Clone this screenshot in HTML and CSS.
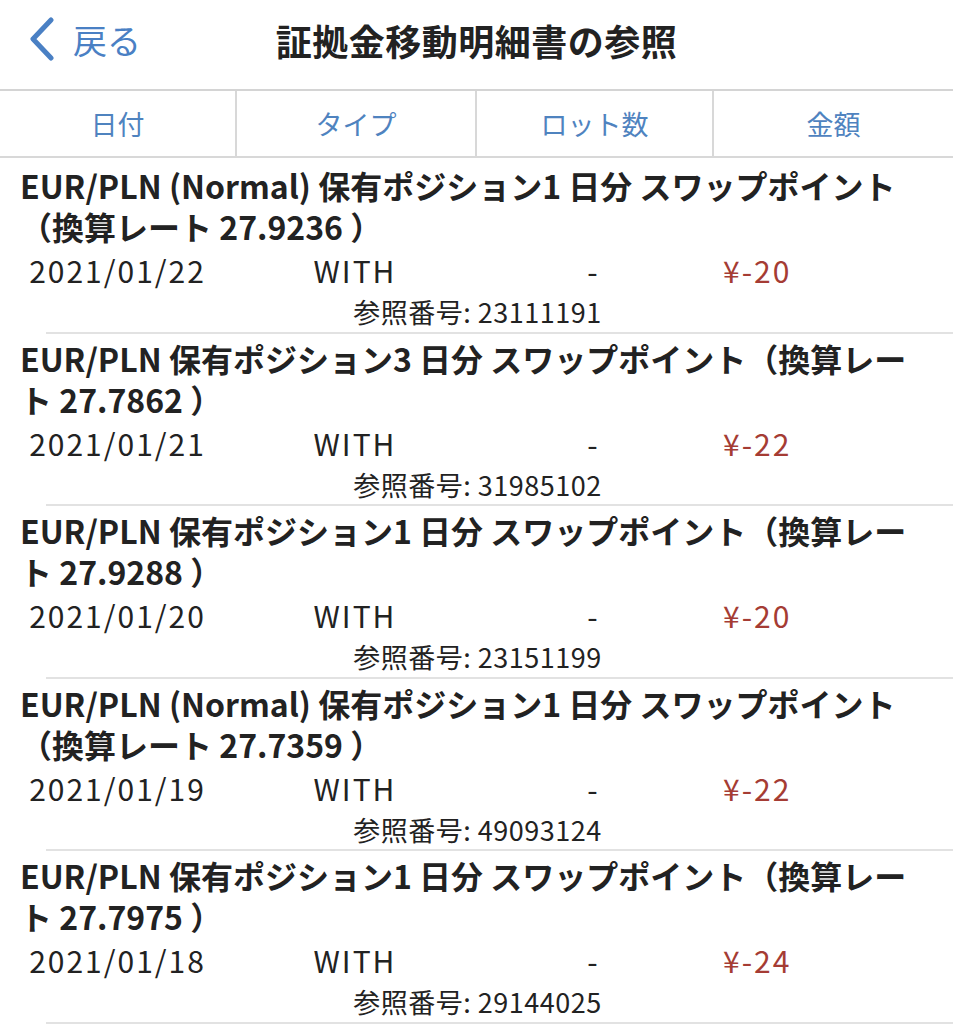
FILE: index.html
```html
<!DOCTYPE html>
<html lang="ja">
<head>
    <meta charset="UTF-8">
    <meta name="viewport" content="width=device-width, initial-scale=1.0">
    <title>証拠金移動明細書の参照</title>
    <link rel="stylesheet" href="styles.css">
</head>
<body>
    <header class="nav-bar">
        <a class="back-link" href="#">
            <svg class="back-icon" width="28" height="46" viewBox="0 0 28 46">
                <path d="M24 3 L6 22 L24 41" fill="none" stroke="#4a80c4" stroke-width="5" stroke-linecap="round" stroke-linejoin="round"/>
            </svg>
            <span>戻る</span>
        </a>
        <h1 class="nav-title">証拠金移動明細書の参照</h1>
        <div></div>
    </header>

    <div class="tab-row">
        <div class="tab">日付</div>
        <div class="tab">タイプ</div>
        <div class="tab">ロット数</div>
        <div class="tab">金額</div>
    </div>

    <ul class="entry-list">
        <li class="entry">
            <p class="entry-title">EUR/PLN (Normal) 保有ポジション1 日分 スワップポイント（換算レート 27.9236 ）</p>
            <div class="entry-data">
                <span class="cell">2021/01/22</span>
                <span class="cell">WITH</span>
                <span class="cell">-</span>
                <span class="cell amount">¥-20</span>
            </div>
            <p class="entry-ref">参照番号: 23111191</p>
        </li>
        <li class="entry">
            <p class="entry-title">EUR/PLN 保有ポジション3 日分 スワップポイント（換算レート 27.7862 ）</p>
            <div class="entry-data">
                <span class="cell">2021/01/21</span>
                <span class="cell">WITH</span>
                <span class="cell">-</span>
                <span class="cell amount">¥-22</span>
            </div>
            <p class="entry-ref">参照番号: 31985102</p>
        </li>
        <li class="entry">
            <p class="entry-title">EUR/PLN 保有ポジション1 日分 スワップポイント（換算レート 27.9288 ）</p>
            <div class="entry-data">
                <span class="cell">2021/01/20</span>
                <span class="cell">WITH</span>
                <span class="cell">-</span>
                <span class="cell amount">¥-20</span>
            </div>
            <p class="entry-ref">参照番号: 23151199</p>
        </li>
        <li class="entry">
            <p class="entry-title">EUR/PLN (Normal) 保有ポジション1 日分 スワップポイント（換算レート 27.7359 ）</p>
            <div class="entry-data">
                <span class="cell">2021/01/19</span>
                <span class="cell">WITH</span>
                <span class="cell">-</span>
                <span class="cell amount">¥-22</span>
            </div>
            <p class="entry-ref">参照番号: 49093124</p>
        </li>
        <li class="entry">
            <p class="entry-title">EUR/PLN 保有ポジション1 日分 スワップポイント（換算レート 27.7975 ）</p>
            <div class="entry-data">
                <span class="cell">2021/01/18</span>
                <span class="cell">WITH</span>
                <span class="cell">-</span>
                <span class="cell amount">¥-24</span>
            </div>
            <p class="entry-ref">参照番号: 29144025</p>
        </li>
    </ul>
</body>
</html>
```

FILE: styles.css
```css
* {
    margin: 0;
    padding: 0;
    box-sizing: border-box;
    font-family: "Noto Sans CJK JP", "Noto Sans", sans-serif;
}

body {
    background: #fff;
    color: #222;
    overflow: hidden;
}

.nav-bar {
    display: grid;
    grid-template-columns: 1fr auto 1fr;
    align-items: center;
    height: 91px;
    padding-bottom: 10px;
    border-bottom: 2px solid #d4d4d4;
}

.back-link {
    display: flex;
    align-items: center;
    gap: 18px;
    padding-left: 27px;
    color: #4a80c4;
    text-decoration: none;
    font-size: 34px;
}

.back-icon {
    display: block;
}

.nav-title {
    font-size: 36px;
    font-weight: 700;
    color: #222;
    letter-spacing: 0.5px;
}

.tab-row {
    display: grid;
    grid-template-columns: 235px 240px 237px 1fr;
    height: 67px;
    border-bottom: 2px solid #d8d8d8;
}

.tab {
    display: flex;
    align-items: center;
    justify-content: center;
    color: #4f83bf;
    font-size: 27px;
    border-left: 2px solid #d8d8d8;
}

.tab:first-child {
    border-left: none;
}

.entry-list {
    list-style: none;
    padding-top: 3px;
}

.entry {
    padding-top: 4px;
}

.entry::after {
    content: "";
    display: block;
    margin-left: 46px;
    border-bottom: 2px solid #e2e2e2;
}

.entry-title {
    padding: 0 20px;
    font-size: 32px;
    font-weight: 700;
    line-height: 41px;
    color: #222;
}

.entry-data {
    display: grid;
    grid-template-columns: 235px 240px 237px 1fr;
    align-items: center;
    height: 46px;
    font-size: 30px;
    letter-spacing: 2px;
}

.cell {
    text-align: center;
}

.amount {
    text-align: left;
    padding-left: 11px;
    color: #a53c34;
}

.entry-ref {
    text-align: center;
    font-size: 27px;
    line-height: 38.5px;
    letter-spacing: 0.5px;
    padding-left: 2px;
}
```
